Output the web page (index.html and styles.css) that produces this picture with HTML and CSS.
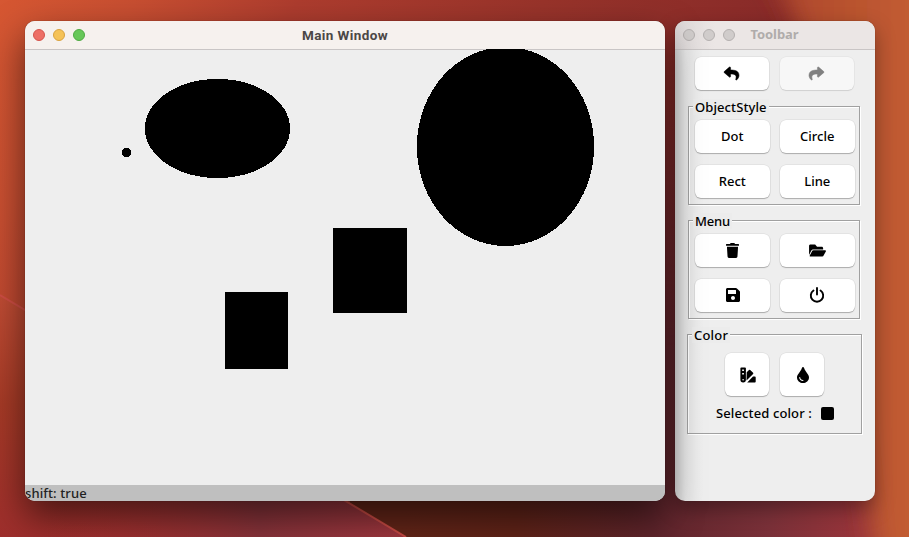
FILE: index.html
```
<!DOCTYPE html>
<html lang="en">
<head>
<meta charset="utf-8">
<title>Main Window</title>
<link rel="stylesheet" href="styles.css">
</head>
<body>
<svg class="wallpaper" viewBox="0 0 909 537" preserveAspectRatio="none" aria-hidden="true">
  <defs>
    <linearGradient id="top" gradientUnits="userSpaceOnUse" x1="0" y1="0" x2="670" y2="400">
      <stop offset="0" stop-color="#d65732"/><stop offset=".15" stop-color="#c74e31"/><stop offset=".33" stop-color="#ad3c2e"/><stop offset=".6" stop-color="#98332a"/><stop offset="1" stop-color="#802628"/>
    </linearGradient>
    <linearGradient id="left" gradientUnits="userSpaceOnUse" x1="0" y1="295" x2="0" y2="537">
      <stop offset="0" stop-color="#c04c34"/><stop offset=".45" stop-color="#a63a26"/><stop offset="1" stop-color="#9e2e2c"/>
    </linearGradient>
    <linearGradient id="floor" gradientUnits="userSpaceOnUse" x1="40" y1="0" x2="405" y2="0">
      <stop offset="0" stop-color="#a63030" stop-opacity="0"/><stop offset=".6" stop-color="#88333a"/><stop offset="1" stop-color="#a0363e"/>
    </linearGradient>
    <linearGradient id="dark" gradientUnits="userSpaceOnUse" x1="400" y1="0" x2="860" y2="0">
      <stop offset="0" stop-color="#632518"/><stop offset=".25" stop-color="#602318"/><stop offset=".55" stop-color="#5e242b"/><stop offset=".8" stop-color="#793038"/><stop offset="1" stop-color="#98343a"/>
    </linearGradient>
    <linearGradient id="fade" x1="0" y1="0" x2="0" y2="1">
      <stop offset=".1" stop-color="#000"/><stop offset=".65" stop-color="#fff"/>
    </linearGradient>
    <mask id="low"><rect x="350" y="0" width="559" height="537" fill="url(#fade)"/></mask>
    <linearGradient id="right" gradientUnits="userSpaceOnUse" x1="770" y1="0" x2="909" y2="0">
      <stop offset="0" stop-color="#ac462c"/><stop offset="1" stop-color="#c25c31"/>
    </linearGradient>
    <filter id="soft" x="-20%" y="-20%" width="140%" height="140%"><feGaussianBlur stdDeviation="12"/></filter>
  </defs>
  <rect width="909" height="537" fill="url(#top)"/>
  <path d="M0 295L406 537H0z" fill="url(#left)"/>
  <path d="M0 295L406 537H0z" fill="url(#floor)"/>
  <path d="M350 0H909V537H406L350 503z" fill="url(#dark)" mask="url(#low)"/>
  <path d="M0 295L406 537" stroke="#cf4e46" stroke-width="2" fill="none" opacity=".9"/>
  <path d="M770 -30H940V570H878Q866 500 850 350Q835 80 770 -30z" fill="url(#right)" filter="url(#soft)"/>
</svg>

<div class="desktop">
  <main class="window window-main">
    <header class="titlebar">
      <div class="lights"><i class="light red"></i><i class="light yellow"></i><i class="light green"></i></div>
      <h1 class="title">Main Window</h1>
    </header>
    <svg class="canvas" width="640" height="436" viewBox="0 0 640 436">
      <rect width="640" height="1" fill="#c9c5c5"/>
      <g shape-rendering="crispEdges">
        <ellipse cx="192.5" cy="79.5" rx="72.6" ry="49.6"/>
        <ellipse cx="480.5" cy="97.5" rx="88.6" ry="99.5"/>
        <circle cx="101.4" cy="103.5" r="4.7"/>
        <rect x="308" y="179" width="74" height="85"/>
        <rect x="200" y="243" width="63" height="77"/>
      </g>
    </svg>
    <footer class="status">shift: true</footer>
  </main>

  <aside class="window window-tools">
    <header class="titlebar inactive">
      <div class="lights"><i class="light"></i><i class="light"></i><i class="light"></i></div>
      <h2 class="title">Toolbar</h2>
    </header>
    <div class="tools">
      <div class="grid history">
        <button class="btn" aria-label="Undo"><svg width="15" height="15" viewBox="0 0 512 512"><path stroke="#000" stroke-width="18" stroke-linejoin="round" d="M8.309 189.836L184.313 37.851C199.719 24.546 224 35.347 224 56.015v80.053c160.629 1.839 288 34.032 288 186.258 0 61.441-39.581 122.309-83.333 154.132-13.653 9.931-33.111-2.533-28.077-18.631 45.344-145.012-21.507-183.51-176.590-185.742V360c0 20.700-24.300 31.453-39.687 18.164l-176.004-152c-11.071-9.562-11.086-26.753 0-36.328z"/></svg></button>
        <button class="btn off" aria-label="Redo"><svg width="15" height="15" viewBox="0 0 512 512"><path stroke="#808080" stroke-width="18" stroke-linejoin="round" transform="matrix(-1 0 0 1 512 0)" d="M8.309 189.836L184.313 37.851C199.719 24.546 224 35.347 224 56.015v80.053c160.629 1.839 288 34.032 288 186.258 0 61.441-39.581 122.309-83.333 154.132-13.653 9.931-33.111-2.533-28.077-18.631 45.344-145.012-21.507-183.510-176.590-185.742V360c0 20.700-24.300 31.453-39.687 18.164l-176.004-152c-11.071-9.562-11.086-26.753 0-36.328z"/></svg></button>
      </div>
      <section class="group">
        <h3 class="legend">ObjectStyle</h3>
        <div class="grid">
          <button class="btn">Dot</button>
          <button class="btn">Circle</button>
          <button class="btn">Rect</button>
          <button class="btn">Line</button>
        </div>
      </section>
      <section class="group">
        <h3 class="legend wide">Menu</h3>
        <div class="grid">
          <button class="btn" aria-label="Delete"><svg width="13" height="15" viewBox="0 0 448 512"><path d="M432 32H312l-9.400-18.700A24 24 0 0 0 281.100 0H166.800a23.720 23.720 0 0 0-21.400 13.300L136 32H16A16 16 0 0 0 0 48v32a16 16 0 0 0 16 16h416a16 16 0 0 0 16-16V48a16 16 0 0 0-16-16zM32 128l21.200 339a48 48 0 0 0 47.900 45h245.800a48 48 0 0 0 47.900-45L416 128z"/></svg></button>
          <button class="btn" aria-label="Open"><svg width="17" height="15" viewBox="0 0 576 512"><path d="M572.694 292.093L500.270 416.248A63.997 63.997 0 0 1 444.989 464H45.025c-18.523 0-30.064-20.093-20.731-36.093l72.424-140.155A64 64 0 0 1 152 244h399.964c18.523 0 30.064 20.093 20.730 48.093zM152 224h328v-48c0-26.510-21.490-48-48-48H272l-64-80H48C21.490 48 0 69.490 0 96v310.046l69.077-134.418C86.214 242.250 117.989 224 152 224z"/></svg></button>
          <button class="btn save" aria-label="Save"><svg width="14" height="16" viewBox="0 0 448 512"><path d="M433.941 129.941l-83.882-83.882A48 48 0 0 0 316.118 32H48C21.490 32 0 53.490 0 80v352c0 26.510 21.490 48 48 48h352c26.510 0 48-21.490 48-48V163.882a48 48 0 0 0-14.059-33.941zM224 416c-35.346 0-64-28.654-64-64 0-35.346 28.654-64 64-64s64 28.654 64 64c0 35.346-28.654 64-64 64zm96-304.520V212c0 6.627-5.373 12-12 12H76c-6.627 0-12-5.373-12-12V108c0-6.627 5.373-12 12-12h228.520c3.183 0 6.235 1.264 8.485 3.515l3.480 3.480A11.996 11.996 0 0 1 320 111.480z"/></svg></button>
          <button class="btn" aria-label="Quit"><svg width="16" height="16" viewBox="0 0 16 16"><path d="M4.500 3.500a6.200 6.200 0 1 0 7 0M8 1v6.500" fill="none" stroke="#000" stroke-width="1.900" stroke-linecap="round"/></svg></button>
        </div>
      </section>
      <section class="group color">
        <h3 class="legend wide">Color</h3>
        <div class="pickers">
          <button class="btn" aria-label="Palette"><svg width="16" height="16" viewBox="0 0 16 16"><path fill-rule="evenodd" d="M1.300.5h3.700q.9 0 .9.800v11.500a2.700 2.700 0 0 1-5.500 0V1.300q0-.8.9-.8zM2.200 2.500v1.400h1.700V2.500zM2.200 6v1.400h1.700V6zM3.100 12a.7.7 0 1 0 .01 0zM6.700 5.200l2.300-2.300q.6-.5 1.200 0l2.900 2.800q.5.600 0 1.200L6.500 13.500zM13 9.600h1.900q.8 0 .8.800v4q0 1.100-.8 1.100H7.200z"/></svg></button>
          <button class="btn" aria-label="Color"><svg width="12" height="16" viewBox="0 0 352 512" preserveAspectRatio="none"><path d="M205.220 22.090c-7.940-28.780-49.440-30.120-58.440 0C100.010 179.850 0 222.720 0 333.910 0 432.350 78.720 512 176 512s176-79.650 176-178.090c0-111.750-99.790-153.340-146.780-311.820zM176 448c-61.750 0-112-50.250-112-112 0-8.840 7.160-16 16-16s16 7.160 16 16c0 44.110 35.890 80 80 80 8.840 0 16 7.160 16 16s-7.160 16-16 16z"/></svg></button>
        </div>
        <div class="selected"><span>Selected color :</span><i class="swatch"></i></div>
      </section>
    </div>
  </aside>
</div>
</body>
</html>
```
FILE: styles.css
```
* { box-sizing: border-box; }

body {
  margin: 0;
  width: 909px;
  height: 537px;
  overflow: hidden;
  font: 500 13px/16px "Noto Sans", sans-serif;
  color: #000;
}

.wallpaper {
  position: absolute;
  inset: 0;
  width: 909px;
  height: 537px;
  z-index: -1;
}

.desktop {
  display: flex;
  gap: 10px;
  padding: 21px 0 0 25px;
  height: 537px;
  overflow: hidden;
}

.window {
  height: 480px;
  border-radius: 10px;
  background: #eee;
  display: flex;
  flex-direction: column;
  overflow: hidden;
}

.window-main {
  width: 640px;
  position: relative;
  z-index: 1;
  box-shadow: 0 0 1px rgba(0, 0, 0, .6), 0 16px 36px rgba(0, 0, 0, .54);
}

.window-tools {
  width: 200px;
  background: linear-gradient(90deg, #d2d2d2, #e6e6e6 10px, #eee 28px);
  box-shadow: 0 0 1px rgba(0, 0, 0, .5), 0 8px 20px rgba(0, 0, 0, .35);
}

.titlebar {
  flex: none;
  height: 28px;
  display: grid;
  grid-template-columns: 54px 1fr 54px;
  align-items: center;
  padding: 0 8px;
  background: #f6f1ee;
}

.titlebar.inactive {
  height: 29px;
  background: linear-gradient(90deg, #ddd8d8, #ebe6e5 40px);
  border-bottom: 1px solid #c9c5c5;
}

.lights { display: flex; gap: 8px; }

.light {
  width: 12px;
  height: 12px;
  border-radius: 50%;
  background: #d0cccb;
  border: 1px solid #b4b0af;
}

.red { background: #ed6f66; border-color: #d4544c; }
.yellow { background: #f5c257; border-color: #d8a23f; }
.green { background: #67c759; border-color: #4fa943; }

.title {
  margin: 0;
  text-align: center;
  font: 700 13.5px/16px Roboto, sans-serif;
  letter-spacing: .4px;
  color: #4b4746;
  white-space: nowrap;
}

.inactive .title {
  font: 700 13px/16px "Noto Sans", sans-serif;
  letter-spacing: -.1px;
  padding: 0 1px 2px 0;
  color: #b0acab;
}

.canvas { display: block; flex: none; }

.status {
  height: 16px;
  background: #bfbfbf;
  color: #222;
  letter-spacing: .1px;
}

.tools {
  display: flex;
  flex-direction: column;
  padding: 7px 13px 0;
}

.grid {
  display: grid;
  grid-template-columns: 74.5px 74.5px;
  gap: 12px 10.500px;
  padding-left: 6px;
}

.history { padding: 0 0 1px 6.5px; }

.btn {
  display: flex;
  align-items: center;
  justify-content: center;
  height: 33px;
  padding: 0 0 1px;
  border: 0;
  border-radius: 6px;
  background: #fff;
  box-shadow: 0 0 0 .5px rgba(0, 0, 0, .09), 0 1px 1px rgba(0, 0, 0, .25);
  font: inherit;
  color: #000;
}

.btn svg { overflow: visible; }
.save { padding: 0 0 1px 1px; }

.btn.off {
  background: #f7f7f7;
  fill: #808080;
  box-shadow: 0 0 0 .5px rgba(0, 0, 0, .06), 0 1px 1px rgba(0, 0, 0, .1);
}

.group {
  width: 172px;
  height: 99px;
  margin-top: 15px;
  border: 1px solid #a0a0a0;
  box-shadow: 1px 1px 0 #fff, inset 1px 1px 0 #fff;
}

.legend {
  width: fit-content;
  margin: -8px 0 5px 4px;
  padding: 0 2px;
  background: #ececec;
  font: inherit;
  letter-spacing: .1px;
}

.legend.wide { letter-spacing: -.2px; }
.color .legend.wide { letter-spacing: .2px; }

.color {
  width: 175px;
  height: 100px;
  margin-left: -1px;
}

.pickers {
  display: flex;
  gap: 11px;
  margin-top: 10px;
  padding-left: 37px;
}

.pickers .btn { width: 44px; height: 43px; padding: 0 0 0 1px; }

.selected {
  display: flex;
  align-items: center;
  gap: 9px;
  margin-top: 9px;
  padding-left: 28px;
  letter-spacing: .12px;
}

.swatch {
  width: 13px;
  height: 13px;
  border-radius: 2px;
  background: #000;
}
```
